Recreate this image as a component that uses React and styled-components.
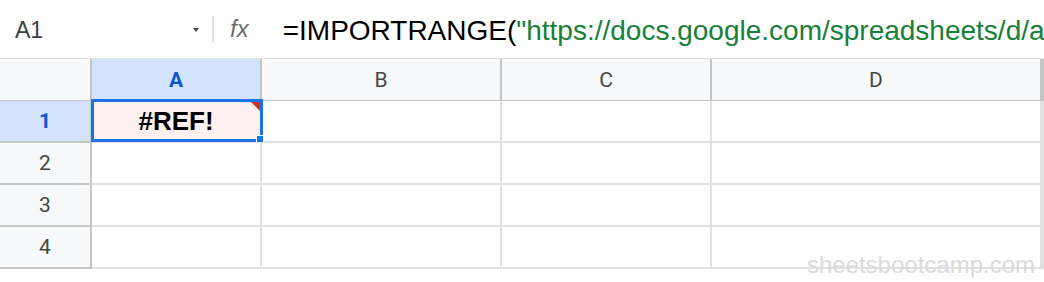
import styled, { createGlobalStyle } from 'styled-components';

const GlobalStyle = createGlobalStyle`
  body {
    margin: 0;
    background: #ffffff;
    font-family: "Liberation Sans", Arial, sans-serif;
  }
`;

const columns = [
  { key: 'A', selected: true },
  { key: 'B' },
  { key: 'C' },
  { key: 'D' },
  { key: 'E' },
];

const rows = [1, 2, 3, 4];

const Page = styled.div`
  position: relative;
  width: 1044px;
  height: 282px;
  overflow: hidden;
`;

const FormulaBar = styled.div`
  height: 58px;
  display: flex;
  align-items: center;
  white-space: nowrap;
`;

const NameBox = styled.div`
  width: 205px;
  box-sizing: border-box;
  padding: 2px 6px 0 15px;
  display: flex;
  align-items: center;
  justify-content: space-between;
`;

const NameText = styled.span`
  font-size: 23px;
  color: #3c4043;
`;

const Caret = styled.span`
  width: 0;
  height: 0;
  border-left: 3px solid transparent;
  border-right: 3px solid transparent;
  border-top: 4px solid #444746;
`;

const Divider = styled.span`
  width: 2px;
  height: 27px;
  margin-left: 7px;
  background: #e3e3e3;
`;

const FxLabel = styled.span`
  margin-left: 16px;
  font-size: 24px;
  font-style: italic;
  color: #6b6f73;
`;

const FormulaText = styled.div`
  flex: 1;
  margin-left: 34px;
  overflow: hidden;
  font-size: 28px;
  color: #000000;
  padding-top: 4px;
`;

const StringPart = styled.span`
  color: #188038;
`;

const Grid = styled.div`
  position: relative;
  display: grid;
  grid-template-columns: 92px 170px 240px 210px 330px 1fr;
  grid-auto-rows: 42px;
  border-top: 1px solid #e1e1e1;
`;

const Corner = styled.div`
  height: 43px;
  box-sizing: border-box;
  background: #f8f9fa;
  border-right: 2px solid #c4c7c5;
  border-bottom: 2px solid #c4c7c5;
`;

const ColHeader = styled.div`
  height: 43px;
  box-sizing: border-box;
  display: flex;
  align-items: center;
  justify-content: center;
  background: ${(p) => (p.$selected ? '#d3e3fd' : '#f8f9fa')};
  border-right: 2px solid #c4c7c5;
  border-bottom: 2px solid #c4c7c5;
  font-family: Roboto, "Liberation Sans", sans-serif;
  font-size: 21px;
  font-weight: ${(p) => (p.$selected ? 700 : 400)};
  color: ${(p) => (p.$selected ? '#0b57d0' : '#444746')};
`;

const RowHeader = styled(ColHeader)`
  height: 42px;
`;

const Cell = styled.div`
  position: relative;
  box-sizing: border-box;
  display: flex;
  align-items: center;
  justify-content: center;
  background: ${(p) => (p.$error ? '#fdf1f0' : '#ffffff')};
  border-right: 2px solid #e1e1e1;
  border-bottom: 2px solid #e1e1e1;
  font-size: 26px;
  font-weight: 700;
  color: #000000;
`;

const ErrorFlag = styled.span`
  position: absolute;
  top: 0;
  right: 0;
  width: 0;
  height: 0;
  border-top: 10px solid #d93025;
  border-left: 10px solid transparent;
`;

const Selection = styled.div`
  position: absolute;
  top: -2px;
  left: -1px;
  right: -3px;
  bottom: -1px;
  border: 3px solid #1a73e8;
  z-index: 2;
  pointer-events: none;
`;

const FillHandle = styled.span`
  position: absolute;
  right: -3px;
  bottom: -3px;
  width: 7px;
  height: 7px;
  box-sizing: border-box;
  background: #1a73e8;
  border-left: 1px solid #ffffff;
  border-top: 1px solid #ffffff;
`;

const Watermark = styled.span`
  position: absolute;
  right: 9px;
  bottom: 5px;
  font-size: 24px;
  line-height: 1;
  color: #dadada;
  z-index: 3;
`;

export default function App() {
  return (
    <Page>
      <GlobalStyle />
      <FormulaBar>
        <NameBox>
          <NameText>A1</NameText>
          <Caret />
        </NameBox>
        <Divider />
        <FxLabel>fx</FxLabel>
        <FormulaText>
          =IMPORTRANGE(
          <StringPart>"https://docs.google.com/spreadsheets/d/abc123</StringPart>
        </FormulaText>
      </FormulaBar>
      <Grid>
        <Corner />
        {columns.map((c) => (
          <ColHeader key={c.key} $selected={c.selected}>
            {c.key === 'E' ? '' : c.key}
          </ColHeader>
        ))}
        {rows.map((r) => [
          <RowHeader key={`h${r}`} $selected={r === 1}>
            {r}
          </RowHeader>,
          ...columns.map((c) => {
            const active = r === 1 && c.key === 'A';
            return (
              <Cell key={`${c.key}${r}`} $error={active}>
                {active && (
                  <>
                    #REF!
                    <ErrorFlag />
                    <Selection>
                      <FillHandle />
                    </Selection>
                  </>
                )}
              </Cell>
            );
          }),
        ])}
      </Grid>
      <Watermark>sheetsbootcamp.com</Watermark>
    </Page>
  );
}
